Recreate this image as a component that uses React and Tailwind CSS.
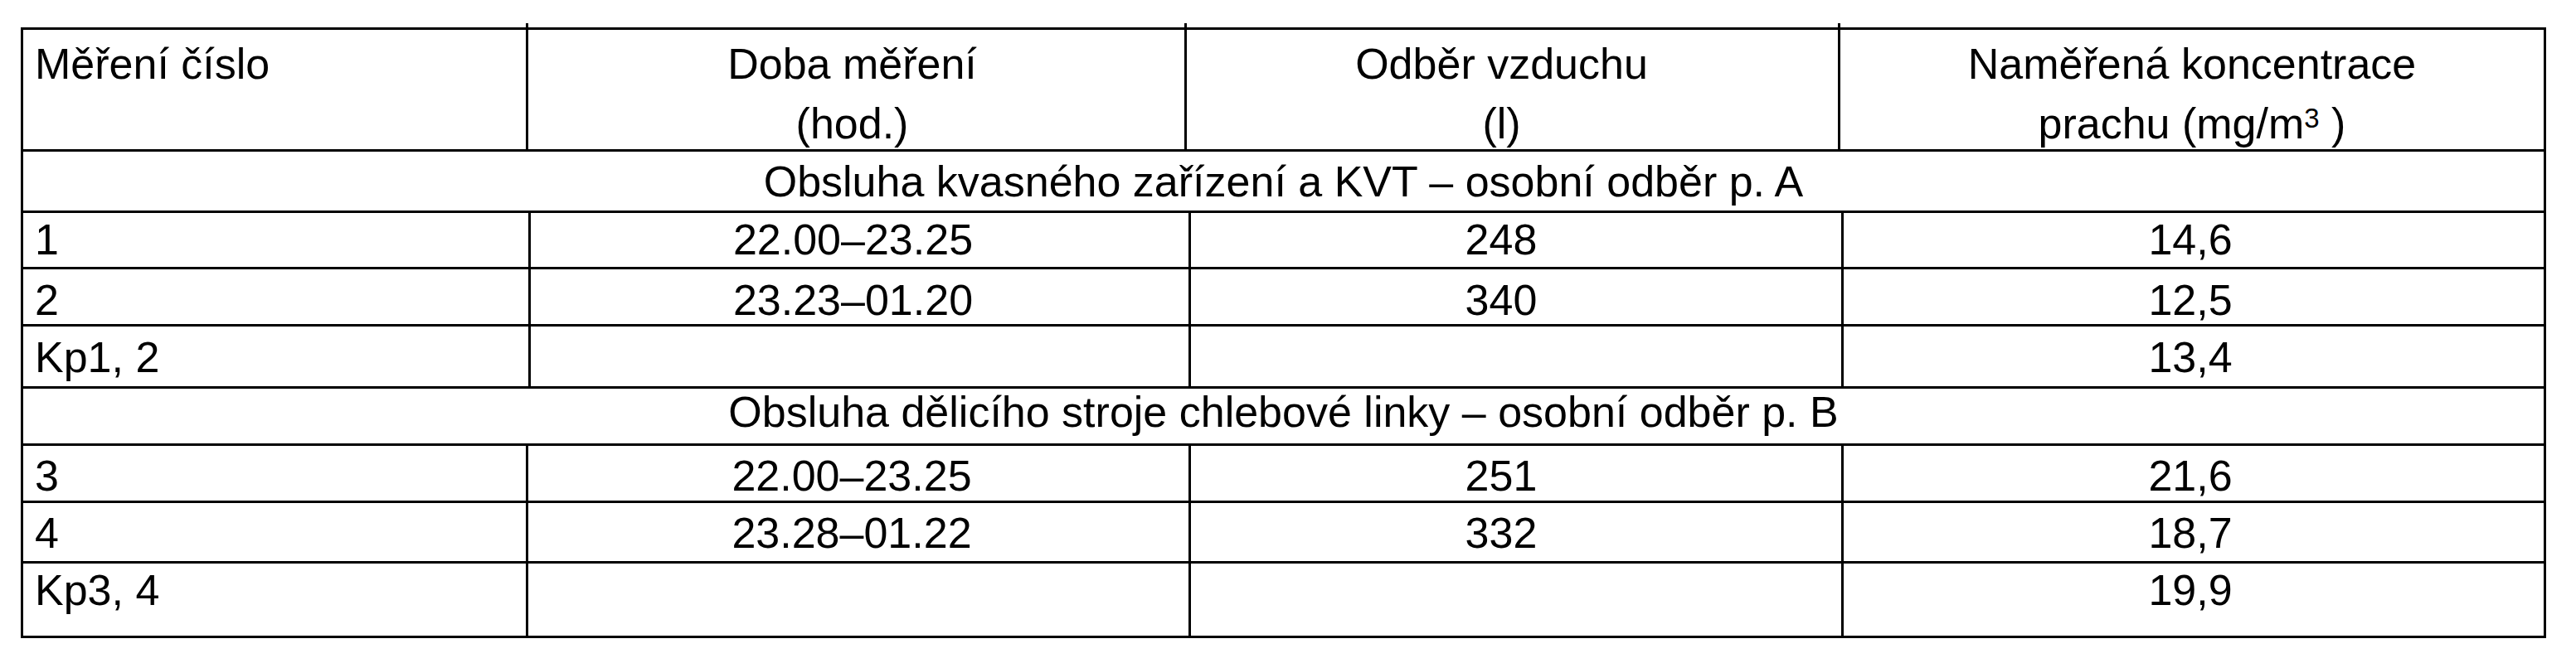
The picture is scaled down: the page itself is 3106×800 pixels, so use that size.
export default function App() {
  const lower = [
    { h: 'h-[68px]', pt: 'pt-[7px]', c1: 'w-[612px]', a: '1', b: '22.00–23.25', c: '248', d: '14,6' },
    { h: 'h-[69px]', pt: 'pt-[12px]', c1: 'w-[612px]', a: '2', b: '23.23–01.20', c: '340', d: '12,5' },
    { h: 'h-[75px]', pt: 'pt-[12px]', c1: 'w-[612px]', a: 'Kp1, 2', b: '', c: '', d: '13,4' },
  ];
  const lower2 = [
    { h: 'h-[69px]', pt: 'pt-[11px]', c1: 'w-[609px]', a: '3', b: '22.00–23.25', c: '251', d: '21,6' },
    { h: 'h-[73px]', pt: 'pt-[11px]', c1: 'w-[609px]', a: '4', b: '23.28–01.22', c: '332', d: '18,7' },
    { h: 'h-[87px]', pt: 'pt-[7px]', c1: 'w-[609px]', a: 'Kp3, 4', b: '', c: '', d: '19,9', last: true },
  ];

  const Row = ({ r }) => (
    <div className={`flex ${r.h} ${r.last ? '' : 'border-b-[3px]'} border-black leading-[50px]`}>
      <div className={`${r.c1} shrink-0 border-r-[3px] border-black pl-[14px] ${r.pt}`}>{r.a}</div>
      <div className={`${r.c1 === 'w-[612px]' ? 'w-[796px]' : 'w-[799px]'} shrink-0 border-r-[3px] border-black pr-[16px] text-center ${r.pt}`}>{r.b}</div>
      <div className={`w-[787px] shrink-0 border-r-[3px] border-black pr-[36px] text-center ${r.pt}`}>{r.c}</div>
      <div className={`flex-1 pr-[8px] text-center ${r.pt}`}>{r.d}</div>
    </div>
  );

  return (
    <div className="min-h-[800px] bg-white pl-[25px] pt-[33px] font-['Liberation_Sans',Arial,sans-serif] text-[52px] text-black">
      <div className="w-[3045px] border-[3px] border-black">
        <div className="flex h-[147px] border-b-[3px] border-black leading-[72px]">
          <div className="relative w-[609px] shrink-0 border-r-[3px] border-black pl-[14px] pt-[5px]">
            Měření číslo
            <span className="absolute -right-[3px] -top-[8px] h-[5px] w-[3px] bg-black" />
          </div>
          <div className="relative w-[794px] shrink-0 border-r-[3px] border-black pr-[10px] pt-[5px] text-center">
            Doba měření
            <br />
            (hod.)
            <span className="absolute -right-[3px] -top-[8px] h-[5px] w-[3px] bg-black" />
          </div>
          <div className="relative w-[788px] shrink-0 border-r-[3px] border-black pr-[26px] pt-[5px] text-center">
            Odběr vzduchu
            <br />
            (l)
            <span className="absolute -right-[3px] -top-[8px] h-[5px] w-[3px] bg-black" />
          </div>
          <div className="flex-1 pt-[5px] text-center">
            Naměřená koncentrace
            <br />
            prachu (mg/m<sup className="top-[-13px] text-[33px]">3</sup> )
          </div>
        </div>

        <div className="h-[74px] border-b-[3px] border-black pt-[11px] text-center leading-[50px]">
          Obsluha kvasného zařízení a KVT – osobní odběr p. A
        </div>
        {lower.map((r, i) => (
          <Row key={i} r={r} />
        ))}

        <div className="h-[69px] border-b-[3px] border-black pt-[3px] text-center leading-[50px]">
          Obsluha dělicího stroje chlebové linky – osobní odběr p. B
        </div>
        {lower2.map((r, i) => (
          <Row key={i} r={r} />
        ))}
      </div>
    </div>
  );
}
